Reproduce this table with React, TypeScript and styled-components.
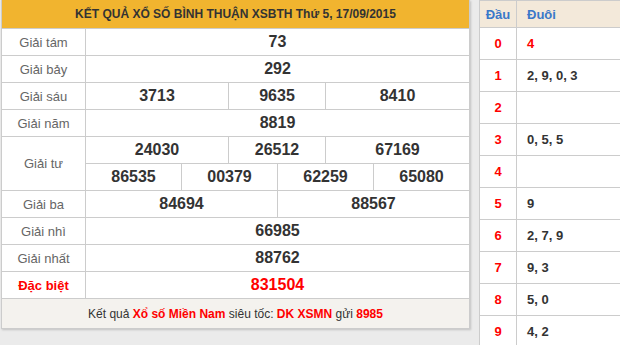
import React from "react";
import styled, { createGlobalStyle } from "styled-components";

const Global = createGlobalStyle`
  html, body { margin: 0; padding: 0; background: #ebebeb; }
  body { font-family: "Liberation Sans", Arial, sans-serif; }
`;

const Page = styled.div`
  width: 620px;
  height: 345px;
  overflow: hidden;
  display: flex;
  align-items: flex-start;
  padding-left: 1px;
  box-sizing: border-box;
  background: #ebebeb;
`;

const ResultTable = styled.div`
  display: grid;
  grid-template-columns: 83px 95px 46px 48px 47px 47px 95px;
  grid-template-rows: 28px repeat(10, 26px) 29px;
  gap: 1px;
  background: #cccccc;
  border: 1px solid #cccccc;
  border-top: 0;
  box-shadow: 1px 1px 2px rgba(0, 0, 0, 0.18);
  flex: none;
`;

const Title = styled.div`
  grid-column: 1 / -1;
  background: #f1b42f;
  color: #333;
  font-weight: bold;
  font-size: 12px;
  display: flex;
  align-items: center;
  justify-content: center;
`;

const Label = styled.div<{ $special?: boolean; $rows?: number }>`
  grid-column: 1;
  grid-row: ${(p) => (p.$rows ? `span ${p.$rows}` : "auto")};
  background: #fff;
  display: flex;
  align-items: center;
  justify-content: center;
  font-size: 13px;
  color: ${(p) => (p.$special ? "#ff0000" : "#666")};
  font-weight: ${(p) => (p.$special ? "bold" : "normal")};
`;

const Value = styled.div<{ $span: number; $special?: boolean }>`
  grid-column: span ${(p) => p.$span};
  background: #fff;
  display: flex;
  align-items: center;
  justify-content: center;
  font-size: 16px;
  font-weight: bold;
  color: ${(p) => (p.$special ? "#ff0000" : "#333")};
`;

const Footer = styled.div`
  grid-column: 1 / -1;
  background: #f4f2ee;
  display: flex;
  align-items: center;
  justify-content: center;
  font-size: 12px;
  color: #333;
  white-space: pre;
`;

const Hi = styled.b`
  color: #ff0000;
`;

const LotoTable = styled.div`
  margin-left: 9px;
  flex: 1;
  display: grid;
  grid-template-columns: 36px 1fr;
  grid-template-rows: 26px repeat(10, 31px);
  gap: 1px;
  background: #cccccc;
  border-top: 1px solid #cccccc;
  border-left: 1px solid #cccccc;
`;

const HeadCell = styled.div<{ $left?: boolean }>`
  background: #f3e9da;
  color: #3a78c9;
  font-weight: bold;
  font-size: 13px;
  display: flex;
  align-items: center;
  justify-content: ${(p) => (p.$left ? "flex-start" : "center")};
  padding-left: ${(p) => (p.$left ? "10px" : "0")};
`;

const HeadDigit = styled.div`
  background: #fff;
  color: #ff0000;
  font-weight: bold;
  font-size: 13px;
  display: flex;
  align-items: center;
  justify-content: center;
`;

const Tails = styled.div<{ $red?: boolean }>`
  background: #fff;
  color: ${(p) => (p.$red ? "#ff0000" : "#333")};
  font-weight: bold;
  font-size: 13px;
  display: flex;
  align-items: center;
  padding-left: 10px;
`;

type Prize = { label: string; values: string[][]; special?: boolean };

const prizes: Prize[] = [
  { label: "Giải tám", values: [["73"]] },
  { label: "Giải bảy", values: [["292"]] },
  { label: "Giải sáu", values: [["3713", "9635", "8410"]] },
  { label: "Giải năm", values: [["8819"]] },
  {
    label: "Giải tư",
    values: [
      ["24030", "26512", "67169"],
      ["86535", "00379", "62259", "65080"],
    ],
  },
  { label: "Giải ba", values: [["84694", "88567"]] },
  { label: "Giải nhì", values: [["66985"]] },
  { label: "Giải nhất", values: [["88762"]] },
  { label: "Đặc biệt", values: [["831504"]], special: true },
];

// span lookup on a 6-track grid
const spans: Record<number, number[]> = {
  1: [6],
  2: [3, 3],
  3: [2, 2, 2],
  4: [1, 2, 2, 1],
};

const loto: { head: string; tails: string; red?: boolean }[] = [
  { head: "0", tails: "4", red: true },
  { head: "1", tails: "2, 9, 0, 3" },
  { head: "2", tails: "" },
  { head: "3", tails: "0, 5, 5" },
  { head: "4", tails: "" },
  { head: "5", tails: "9" },
  { head: "6", tails: "2, 7, 9" },
  { head: "7", tails: "9, 3" },
  { head: "8", tails: "5, 0" },
  { head: "9", tails: "4, 2" },
];

export default function App() {
  return (
    <>
      <Global />
      <Page>
        <ResultTable>
          <Title>KẾT QUẢ XỔ SỐ BÌNH THUẬN XSBTH Thứ 5, 17/09/2015</Title>
          {prizes.map((p) => (
            <React.Fragment key={p.label}>
              <Label $special={p.special} $rows={p.values.length > 1 ? p.values.length : undefined}>
                {p.label}
              </Label>
              {p.values.map((row, ri) =>
                row.map((v, i) => (
                  <Value
                    key={`${ri}-${i}`}
                    $span={spans[row.length][i]}
                    $special={p.special}
                    style={ri > 0 && i === 0 ? { gridColumn: `2 / span ${spans[row.length][i]}` } : undefined}
                  >
                    {v}
                  </Value>
                ))
              )}
            </React.Fragment>
          ))}
          <Footer>
            Kết quả <Hi>Xổ số Miền Nam</Hi> siêu tốc: <Hi>DK XSMN</Hi> gửi <Hi>8985</Hi>
          </Footer>
        </ResultTable>
        <LotoTable>
          <HeadCell>Đầu</HeadCell>
          <HeadCell $left>Đuôi</HeadCell>
          {loto.map((r) => (
            <React.Fragment key={r.head}>
              <HeadDigit>{r.head}</HeadDigit>
              <Tails $red={r.red}>{r.tails}</Tails>
            </React.Fragment>
          ))}
        </LotoTable>
      </Page>
    </>
  );
}
